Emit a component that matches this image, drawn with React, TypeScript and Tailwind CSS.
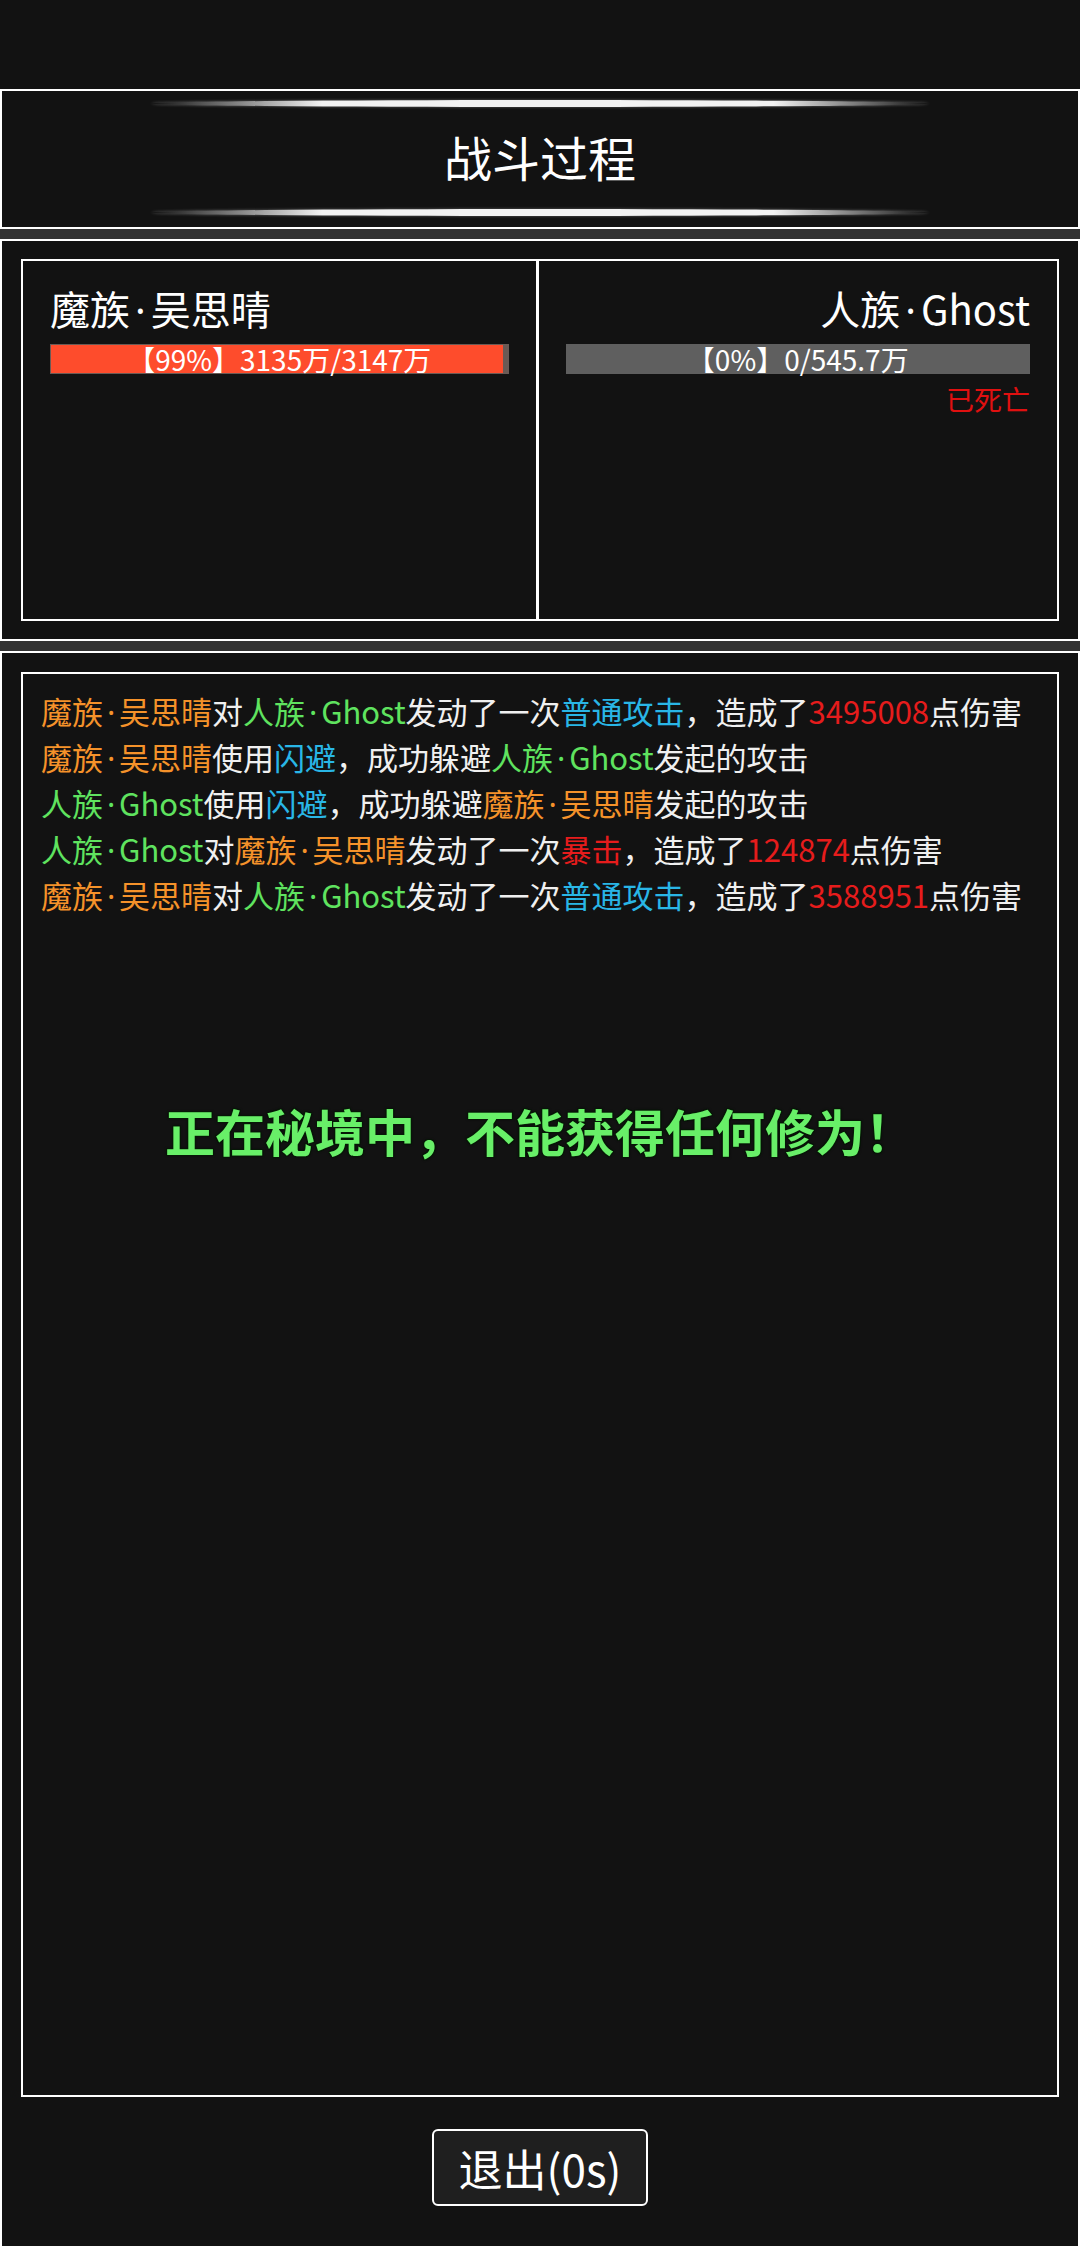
import React from "react";

const O = "text-[#f5922a]";
const G = "text-[#5fe35f]";
const B = "text-[#29b6e6]";
const R = "text-[#e61c1c]";

function Dot() {
  return <span className="mx-[0.125em] leading-[0] font-['Noto_Sans','DejaVu_Sans',sans-serif]">·</span>;
}

function Mo() {
  return (
    <span className={O}>
      魔族<Dot />吴思晴
    </span>
  );
}
function Ren() {
  return (
    <span className={G}>
      人族<Dot />Ghost
    </span>
  );
}

function Deco() {
  return (
    <div className="w-[778px] h-[7px] rounded-[50%] bg-[linear-gradient(90deg,rgba(255,255,255,0)_0%,#f2f2f2_22%,#f2f2f2_80%,rgba(255,255,255,0)_100%)] shadow-[0_0_3px_rgba(255,255,255,0.35)]" />
  );
}

export default function App() {
  return (
    <div className="w-[1080px] h-[2248px] overflow-hidden bg-[#121212] text-white font-['Noto_Sans_CJK_SC','Noto_Sans',sans-serif]">
      <div className="h-[89px]" />
      {/* header */}
      <div className="h-[140px] border-2 border-white bg-[#121212] flex flex-col items-center">
        <div className="mt-[9px]">
          <Deco />
        </div>
        <div className="mt-[13px] h-[72px] text-[48px] leading-[72px] text-white">战斗过程</div>
        <div className="mt-[17px]">
          <Deco />
        </div>
      </div>
      <div className="h-[10px] bg-[#333333]" />
      {/* combatants */}
      <div className="h-[402px] border-2 border-white bg-[#121212] px-[19px] pt-[18px]">
        <div className="h-[362px] border-2 border-white flex">
          <div className="w-[515.5px] border-r-[3px] border-white px-[27px] pt-[19px]">
            <div className="h-[56px] text-[40px] leading-[56px] text-white">
              魔族<Dot />吴思晴
            </div>
            <div className="mt-[8px] h-[30px] bg-[#6a5a55] p-[1px] relative">
              <div className="h-full w-[99%] bg-[#fe4c2c]" />
              <div className="absolute inset-0 flex items-center justify-center text-[28px] leading-[30px] text-white">
                【99%】3135万/3147万
              </div>
            </div>
          </div>
          <div className="flex-1 px-[27px] pt-[19px] flex flex-col items-end">
            <div className="h-[56px] text-[40px] leading-[56px] text-white">
              人族<Dot />Ghost
            </div>
            <div className="mt-[8px] h-[30px] w-full bg-[#5f5f5f] flex items-center justify-center text-[28px] leading-[30px] text-white">
              【0%】0/545.7万
            </div>
            <div className="mt-[5px] text-[28px] leading-[40px] text-[#e01010]">已死亡</div>
          </div>
        </div>
      </div>
      <div className="h-[10px] bg-[#333333]" />
      {/* log */}
      <div className="h-[1597px] border-2 border-white bg-[#121212] px-[19px] pt-[19px] flex flex-col items-center">
        <div className="w-full h-[1425px] border-2 border-white pt-[14px] pl-[18px] pr-[10px]">
          <div className="text-[31px] leading-[46px] text-[#f0f0f0] whitespace-nowrap">
            <div className="h-[46px]">
              <Mo />对<Ren />发动了一次<span className={B}>普通攻击</span>，造成了<span className={R}>3495008</span>点伤害
            </div>
            <div className="h-[46px]">
              <Mo />使用<span className={B}>闪避</span>，成功躲避<Ren />发起的攻击
            </div>
            <div className="h-[46px]">
              <Ren />使用<span className={B}>闪避</span>，成功躲避<Mo />发起的攻击
            </div>
            <div className="h-[46px]">
              <Ren />对<Mo />发动了一次<span className={R}>暴击</span>，造成了<span className={R}>124874</span>点伤害
            </div>
            <div className="h-[46px]">
              <Mo />对<Ren />发动了一次<span className={B}>普通攻击</span>，造成了<span className={R}>3588951</span>点伤害
            </div>
          </div>
          <div className="mt-[175px] pr-[8px] text-center text-[50px] leading-[74px] font-bold text-[#68ef68] [text-shadow:1px_1px_0_#061806,-1px_-1px_0_#061806,1px_-1px_0_#061806,-1px_1px_0_#061806,0_0_3px_#000]">
            正在秘境中，不能获得任何修为<span className="inline-block w-[50px] text-center">！</span>
          </div>
        </div>
        <button className="mt-[32px] w-[216px] h-[77px] border-2 border-white rounded-[6px] bg-[#1f1f1f] flex items-center justify-center text-[44px] leading-[60px] text-white">
          退出(0s)
        </button>
      </div>
    </div>
  );
}
